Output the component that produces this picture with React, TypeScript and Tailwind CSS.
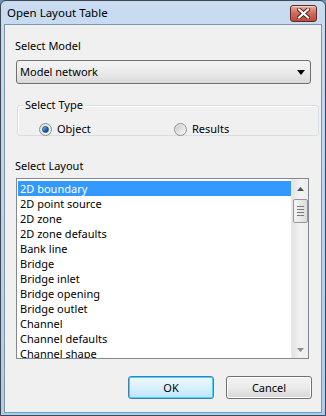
import React from 'react';

const layouts = [
    '2D boundary',
    '2D point source',
    '2D zone',
    '2D zone defaults',
    'Bank line',
    'Bridge',
    'Bridge inlet',
    'Bridge opening',
    'Bridge outlet',
    'Channel',
    'Channel defaults',
    'Channel shape',
];

const Radio: React.FC<{ checked?: boolean; label: string }> = ({ checked, label }) => (
    <div className="flex items-center gap-[5px]">
        <div className="w-[13px] h-[13px] rounded-full border border-[#8e8f8f] bg-gradient-to-br from-[#dcdcdc] to-[#fbfbfb] flex items-center justify-center">
            {checked ? (
                <div className="w-[7px] h-[7px] rounded-full bg-gradient-to-br from-[#8fd1f5] via-[#1f6fb5] to-[#0f3c73] border border-[#1b4d86]" />
            ) : (
                <div className="w-[9px] h-[9px] rounded-full bg-gradient-to-br from-[#cbcbcb] to-[#f6f6f6]" />
            )}
        </div>
        <span className="leading-[16px] text-[#000]">{label}</span>
    </div>
);

const App: React.FC = () => {
    return (
        <div className="w-[326px] h-[416px] bg-[#6d93b9] font-['Noto_Sans',sans-serif] text-[11px] text-black">
            <div className="flex flex-col h-full rounded-t-[6px] border border-[#3f4852] bg-gradient-to-b from-[#c8dbf1] to-[#b0cbea]">
                {/* Title bar */}
                <div className="h-[23px] flex items-center justify-between pl-[6px] pr-[8px]">
                    <span className="text-[11.5px] leading-[16px] text-black">Open Layout Table</span>
                    <div className="w-[27px] h-[17px] mt-[2px] rounded-[3px] border border-[#5e2b2b] bg-gradient-to-b from-[#e9a99a] via-[#d06a56] to-[#bd4a3a] flex items-center justify-center shadow-[inset_0_1px_0_rgba(255,255,255,0.5)]">
                        <svg width="13" height="11" viewBox="0 0 13 11">
                            <path d="M2 1.5 L11 9.5 M11 1.5 L2 9.5" stroke="#4a1f1f" strokeWidth="4" strokeLinecap="square" />
                            <path d="M2 1.5 L11 9.5 M11 1.5 L2 9.5" stroke="#ffffff" strokeWidth="2.2" strokeLinecap="square" />
                        </svg>
                    </div>
                </div>

                {/* Frame around client area */}
                <div className="flex-1 ml-[3px] mr-[3px] mb-[2px] border border-[#7f96ad] border-b-[#5aa6cf] bg-[#f0f0f0] flex flex-col">
                    <span className="mt-[13px] ml-[10px] leading-[16px]">Select Model</span>

                    {/* Dropdown */}
                    <div className="mt-[6px] ml-[11px] w-[295px] h-[24px] rounded-[3px] border border-[#707070] bg-gradient-to-b from-[#f4f4f4] via-[#ebebeb] to-[#d9d9d9] flex items-center justify-between pl-[3px] pr-[5px]">
                        <span className="leading-[16px]">Model network</span>
                        <svg width="8" height="5" viewBox="0 0 8 5">
                            <path d="M0 0 H8 L4 5 Z" fill="#000" />
                        </svg>
                    </div>

                    {/* Select Type group */}
                    <div className="relative mt-[21px] ml-[12px] w-[302px] h-[31px] rounded-[3px] border border-[#d5dfe5] shadow-[inset_1px_1px_0_#ffffff]">
                        <span className="absolute -top-[9px] left-[5px] px-[2px] bg-[#f0f0f0] leading-[16px]">Select Type</span>
                        <div className="flex items-center pt-[15px] pl-[21px]">
                            <div className="w-[135px]">
                                <Radio checked label="Object" />
                            </div>
                            <Radio label="Results" />
                        </div>
                    </div>

                    <span className="mt-[22px] ml-[10px] leading-[16px]">Select Layout</span>

                    {/* List box */}
                    <div className="mt-[4px] ml-[11px] w-[293px] h-[181px] border border-[#828790] bg-white flex">
                        <div className="flex-1 pt-[2px] pl-[1px] overflow-hidden">
                            {layouts.map((item, idx) => (
                                <div
                                    key={item}
                                    className={
                                        idx === 0
                                            ? 'h-[15px] leading-[15px] pl-[2px] bg-[#3399ff] text-white'
                                            : 'h-[15px] leading-[15px] pl-[2px] text-black'
                                    }
                                >
                                    {item}
                                </div>
                            ))}
                        </div>
                        {/* Scrollbar */}
                        <div className="w-[17px] h-full bg-gradient-to-r from-[#e3e3e3] via-[#f2f2f2] to-[#eeeeee] border-l border-[#e9e9e9] flex flex-col items-center">
                            <div className="h-[19px] w-full flex items-center justify-center">
                                <svg width="7" height="4" viewBox="0 0 7 4">
                                    <path d="M0 4 L3.5 0 L7 4 Z" fill="#4f4f4f" />
                                </svg>
                            </div>
                            <div className="mt-[1px] w-[15px] h-[24px] rounded-[2px] border border-[#979797] bg-gradient-to-r from-[#f4f4f4] to-[#dcdcdc] flex flex-col items-center justify-center gap-[2px]">
                                <div className="w-[7px] h-[1px] bg-[#7a7a7a]" />
                                <div className="w-[7px] h-[1px] bg-[#7a7a7a]" />
                                <div className="w-[7px] h-[1px] bg-[#7a7a7a]" />
                                <div className="w-[7px] h-[1px] bg-[#7a7a7a]" />
                            </div>
                            <div className="flex-1" />
                            <div className="h-[17px] w-full flex items-center justify-center">
                                <svg width="7" height="4" viewBox="0 0 7 4">
                                    <path d="M0 0 L7 0 L3.5 4 Z" fill="#8a8a8a" />
                                </svg>
                            </div>
                        </div>
                    </div>

                    {/* Buttons */}
                    <div className="mt-[17px] flex">
                        <button className="ml-[123px] w-[86px] h-[23px] rounded-[3px] border border-[#3c7fb1] bg-gradient-to-b from-[#ecf7fd] via-[#dbf0fc] to-[#bde5fb] shadow-[inset_0_0_0_1px_#48d1f9] leading-[16px]">
                            OK
                        </button>
                        <button className="ml-[12px] w-[86px] h-[23px] rounded-[3px] border border-[#707070] bg-gradient-to-b from-[#f2f2f2] via-[#ebebeb] to-[#d6d6d6] shadow-[inset_0_0_0_1px_#fcfcfc] leading-[16px]">
                            Cancel
                        </button>
                    </div>
                </div>
            </div>
        </div>
    );
};

export default App;
